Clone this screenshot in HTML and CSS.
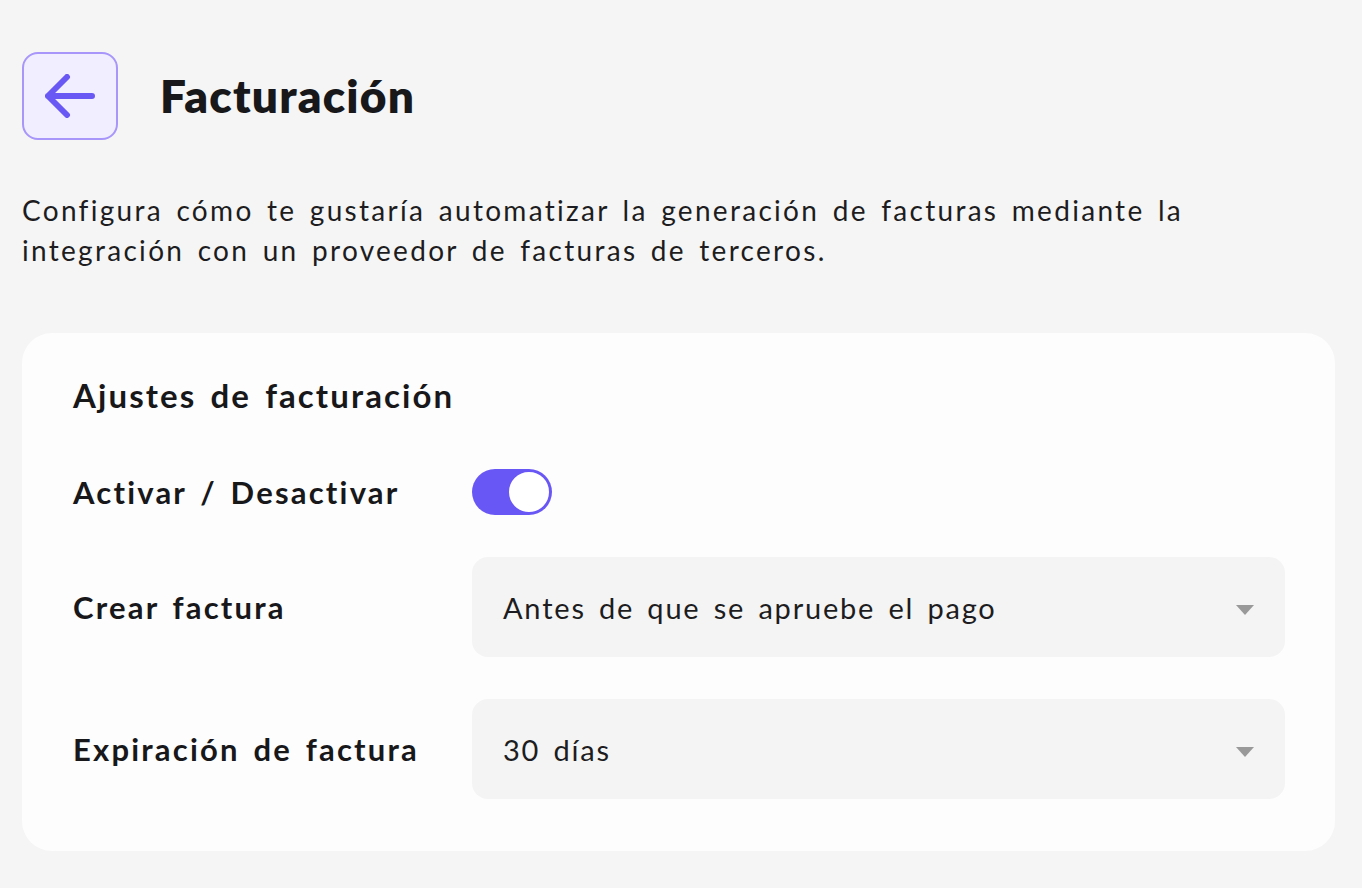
FILE: index.html
```html
<!DOCTYPE html>
<html lang="es">
<head>
<meta charset="utf-8">
<title>Facturación</title>
<link rel="stylesheet" href="styles.css">
</head>
<body>
<main class="page">
  <header class="header">
    <button class="back-btn" aria-label="Volver">
      <svg width="50" height="44" viewBox="0 0 50 44" fill="none" stroke="#6a58f5" stroke-width="6" stroke-linecap="round" stroke-linejoin="round">
        <path d="M47 22H3M22 3L3 22L22 41"/>
      </svg>
    </button>
    <h1 class="title">Facturación</h1>
  </header>
  <p class="intro">Configura cómo te gustaría automatizar la generación de facturas mediante la<br>integración con un proveedor de facturas de terceros.</p>
  <section class="card">
    <h2 class="card-title">Ajustes de facturación</h2>
    <div class="form">
      <div class="label">Activar / Desactivar</div>
      <div class="field">
        <div class="toggle"><span class="knob"></span></div>
      </div>
      <div class="label">Crear factura</div>
      <div class="select">
        <span class="select-text">Antes de que se apruebe el pago</span>
        <span class="caret"></span>
      </div>
      <div class="label">Expiración de factura</div>
      <div class="select">
        <span class="select-text">30 días</span>
        <span class="caret"></span>
      </div>
    </div>
  </section>
</main>
</body>
</html>
```
FILE: styles.css
```css
* { box-sizing: border-box; }
html, body { margin: 0; padding: 0; }
body {
  background: #f5f5f5;
  font-family: "Lato", "Noto Sans", sans-serif;
  color: #18181b;
}
.page {
  padding: 52px 27px 0 22px;
}
.header {
  display: flex;
  align-items: center;
  gap: 42px;
}
.back-btn {
  width: 96px;
  height: 88px;
  border: 2px solid #a896fb;
  background: #f1efff;
  border-radius: 16px;
  display: flex;
  align-items: center;
  justify-content: center;
  padding: 0;
}
.title {
  margin: 0;
  font-size: 46px;
  font-weight: 800;
  letter-spacing: 1.2px;
  line-height: 1;
}
.intro {
  margin: 50px 0 0;
  font-size: 28px;
  line-height: 40px;
  letter-spacing: 2.3px;
  word-spacing: 4px;
  color: #1d1d21;
  white-space: nowrap;
}
.card {
  margin-top: 63px;
  background: #fdfdfd;
  border-radius: 30px;
  padding: 44px 50px 52px 51px;
}
.card-title {
  margin: 0;
  font-size: 33px;
  font-weight: 700;
  line-height: 36px;
  letter-spacing: 2.1px;
  word-spacing: 4px;
}
.form {
  margin-top: 56px;
  display: grid;
  grid-template-columns: 399px 1fr;
  row-gap: 42px;
  align-items: center;
}
.label {
  font-size: 31px;
  font-weight: 700;
  letter-spacing: 2.2px;
  word-spacing: 4px;
  white-space: nowrap;
}
.field { display: flex; }
.toggle {
  width: 80px;
  height: 46px;
  border-radius: 23px;
  background: #6957f5;
  padding: 1px;
  display: flex;
  justify-content: flex-end;
  align-items: center;
}
.knob {
  width: 44px;
  height: 44px;
  border-radius: 50%;
  background: #ffffff;
  border: 2px solid #6957f5;
}
.select {
  height: 100px;
  background: #f4f4f4;
  border-radius: 16px;
  display: flex;
  align-items: center;
  justify-content: space-between;
  padding: 0 31px 0 31px;
}
.select-text {
  font-size: 29px;
  letter-spacing: 1.8px;
  word-spacing: 4px;
  color: #1d1d21;
}
.caret {
  width: 0;
  height: 0;
  border-left: 9.5px solid transparent;
  border-right: 9.5px solid transparent;
  border-top: 10px solid #999999;
  margin-top: 6px;
}
```
